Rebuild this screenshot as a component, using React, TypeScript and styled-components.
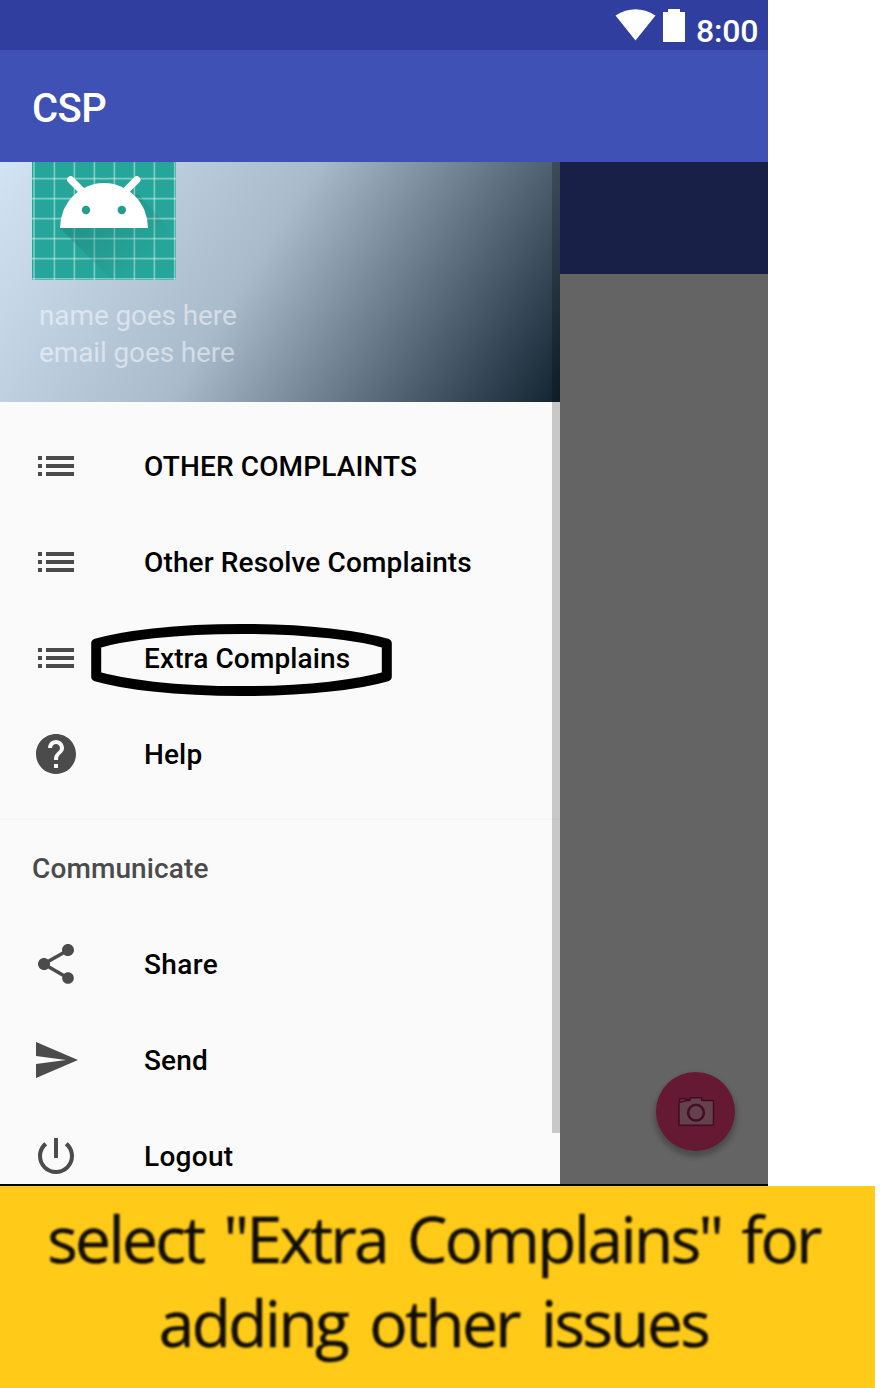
import React from "react";
import styled, { createGlobalStyle } from "styled-components";

const GlobalStyle = createGlobalStyle`
  body { margin: 0; background: #fff; font-family: Roboto, sans-serif; }
  * { box-sizing: border-box; }
`;

const Page = styled.div`
  width: 883px;
  height: 1388px;
  overflow: hidden;
`;

const Phone = styled.div`
  width: 768px;
  height: 1186px;
  display: flex;
  flex-direction: column;
  border-bottom: 2px solid #000;
`;

const StatusBar = styled.div`
  height: 50px;
  flex: none;
  background: #303f9f;
  color: #fff;
  display: flex;
  justify-content: flex-end;
  align-items: flex-start;
  padding: 9px 10px 0 0;
`;

const Clock = styled.span`
  font-size: 32px;
  line-height: 44px;
  font-weight: 500;
  letter-spacing: -0.2px;
  margin-left: 10px;
  width: 62px;
  white-space: nowrap;
`;

const AppBar = styled.div`
  height: 112px;
  flex: none;
  background: #3f51b5;
  color: #fff;
  display: flex;
  align-items: center;
  padding: 4px 0 0 32px;
  font-size: 40px;
  font-weight: 500;
  letter-spacing: -0.5px;
`;

const Body = styled.div`
  flex: 1;
  min-height: 0;
  display: flex;
`;

const Drawer = styled.div`
  position: relative;
  width: 560px;
  height: 100%;
  overflow: hidden;
  background: #fafafa;
`;

const ScrollBar = styled.div`
  position: absolute;
  right: 0;
  top: 0;
  width: 8px;
  height: 971px;
  background: rgba(0, 0, 0, 0.2);
`;

const Header = styled.div`
  height: 352px;
  margin-top: -112px;
  padding: 86px 32px 0;
  background: linear-gradient(122.15deg, #dbecfc 0%, #a9bacb 50%, #112231 100%);
`;

const Account = styled.div`
  padding: 17px 0 0 7px;
  font-size: 28px;
  line-height: 37px;
  letter-spacing: -0.12px;
  color: rgba(255, 255, 255, 0.5);
`;

const Menu = styled.div`
  padding-top: 16px;
`;

const Row = styled.div`
  position: relative;
  height: 96px;
  padding-left: 32px;
  display: flex;
  align-items: center;
  font-size: 28px;
  font-weight: 500;
  color: #000;
`;

const Label = styled.span<{ $spacing?: number }>`
  margin-left: 64px;
  padding-top: 1px;
  white-space: nowrap;
  letter-spacing: ${(p) => p.$spacing ?? 0.13}px;
`;

const Divider = styled.div`
  height: 2px;
  margin-top: 16px;
  background: #f6f6f6;
`;

const Section = styled.div`
  height: 96px;
  padding: 1px 0 0 32px;
  display: flex;
  align-items: center;
  font-size: 28px;
  font-weight: 500;
  letter-spacing: 0.12px;
  color: #4b4b4b;
`;

const Ring = styled.svg`
  position: absolute;
  left: 90px;
  top: 12px;
`;

const Content = styled.div`
  flex: 1;
  display: flex;
  flex-direction: column;
  background: #646464;
`;

const DimmedBar = styled.div`
  height: 112px;
  background: #192047;
`;

const FabArea = styled.div`
  flex: 1;
  display: flex;
  justify-content: flex-end;
  align-items: flex-end;
  padding: 0 33px 33px 0;
`;

const Fab = styled.div`
  width: 79px;
  height: 79px;
  border-radius: 50%;
  background: #661933;
  box-shadow: 0 4px 5px 2px rgba(0, 0, 0, 0.24);
  display: flex;
  align-items: center;
  justify-content: center;
`;

const Caption = styled.div`
  width: 875px;
  height: 202px;
  background: #ffca18;
  padding: 11px 8px 0 0;
  display: flex;
  flex-direction: column;
  align-items: center;
  font-family: "Open Sans", "Noto Sans", sans-serif;
  color: #100d02;
`;

const CaptionLine = styled.div<{ $gap: number }>`
  font-size: 64px;
  line-height: 83.5px;
  white-space: nowrap;
  letter-spacing: -2.6px;
  word-spacing: ${(p) => p.$gap}px;
  -webkit-text-stroke: 0.4px #100d02;
  filter: blur(0.8px);
`;

const paths = {
  list: "M3 13h2v-2H3v2zm0 4h2v-2H3v2zm0-8h2V7H3v2zm4 4h14v-2H7v2zm0 4h14v-2H7v2zM7 7v2h14V7H7z",
  help: "M12 2C6.48 2 2 6.48 2 12s4.48 10 10 10 10-4.48 10-10S17.52 2 12 2zm1 17h-2v-2h2v2zm2.07-7.75l-.9.92C13.45 12.9 13 13.5 13 15h-2v-.5c0-1.1.45-2.1 1.17-2.83l1.24-1.26c.37-.36.59-.86.59-1.41 0-1.1-.9-2-2-2s-2 .9-2 2H8c0-2.21 1.79-4 4-4s4 1.79 4 4c0 .88-.36 1.68-.93 2.25z",
  share:
    "M18 16.08c-.76 0-1.44.3-1.96.77L8.91 12.7c.05-.23.09-.46.09-.7s-.04-.47-.09-.7l7.05-4.11c.54.5 1.25.81 2.04.81 1.66 0 3-1.34 3-3s-1.34-3-3-3-3 1.34-3 3c0 .24.04.47.09.7L8.04 9.81C7.5 9.31 6.79 9 6 9c-1.66 0-3 1.34-3 3s1.34 3 3 3c.79 0 1.5-.31 2.04-.81l7.12 4.16c-.05.21-.08.43-.08.65 0 1.61 1.31 2.92 2.92 2.92s2.92-1.31 2.92-2.92-1.31-2.92-2.92-2.92z",
  send: "M2.01 21L23 12 2.01 3 2 10l15 2-15 2z",
  power:
    "M13 3h-2v10h2V3zm4.83 2.17l-1.42 1.42C17.99 7.86 19 9.81 19 12c0 3.87-3.13 7-7 7s-7-3.13-7-7c0-2.19 1.01-4.14 2.58-5.42L6.17 5.17C4.23 6.82 3 9.26 3 12c0 4.97 4.03 9 9 9s9-4.03 9-9c0-2.74-1.23-5.18-3.17-6.83z",
};

type IconName = keyof typeof paths;

const Icon = ({ name }: { name: IconName }) => (
  <svg width="48" height="48" viewBox="0 0 24 24" fill="#4b4b4b">
    <path d={paths[name]} />
  </svg>
);

const MenuItem = ({
  icon,
  text,
  spacing,
  circled,
}: {
  icon: IconName;
  text: string;
  spacing?: number;
  circled?: boolean;
}) => (
  <Row>
    <Icon name={icon} />
    <Label $spacing={spacing}>{text}</Label>
    {circled && (
      <Ring width="304" height="76" viewBox="90 622 304 76">
        <path
          d="M96.2 643.6A171 31 0 0 1 386.8 643.6V676.4A171 31 0 0 1 96.2 676.4Z"
          fill="none"
          stroke="#000"
          strokeWidth="10"
          strokeLinejoin="round"
        />
      </Ring>
    )}
  </Row>
);

const Avatar = () => (
  <svg width="144" height="144" viewBox="32 136 144 144" display="block">
    <defs>
      <linearGradient id="shade" gradientUnits="userSpaceOnUse" x1="85" y1="200" x2="145" y2="265">
        <stop offset="0" stopColor="#1c7c72" stopOpacity="0.5" />
        <stop offset="1" stopColor="#1c7c72" stopOpacity="0" />
      </linearGradient>
    </defs>
    <rect x="32" y="136" width="144" height="144" fill="#26a69a" />
    <g stroke="#fff" strokeOpacity="0.42" strokeWidth="1.6">
      {[34, 54.4, 74.4, 94.4, 114.4, 134.4, 154.4, 174.7].map((x) => (
        <path key={x} d={`M${x} 136V280`} />
      ))}
      {[158.6, 178.6, 198.6, 218.6, 238.6, 258.6, 278.7].map((y) => (
        <path key={y} d={`M32 ${y}H176`} />
      ))}
    </g>
    <path d="M60 228L112 280H176V236L138 194Z" fill="url(#shade)" />
    <path d="M60 228A44 45 0 0 1 148 228Z" fill="#fff" />
    <path d="M70.7 179.8L82 191M136.8 179.8L125.5 191" stroke="#fff" strokeWidth="7.2" strokeLinecap="round" />
    <circle cx="86" cy="210" r="4.2" fill="#249c90" />
    <circle cx="121.8" cy="210" r="4.2" fill="#249c90" />
  </svg>
);

const Camera = () => (
  <svg width="40" height="32" viewBox="676 1096 40 32" fill="#65414e" stroke="#420d20" strokeWidth="1.5">
    <path d="M679 1125.2V1102.3L680 1098.7H686.5V1100H690.3V1097.8H701.7V1100.6H713.5V1125.2Z" strokeLinejoin="round" />
    <path d="M679.6 1102.3L687 1100.6H690" fill="none" />
    <circle cx="696" cy="1112.7" r="7.9" strokeWidth="2.5" />
  </svg>
);

export default function App() {
  return (
    <Page>
      <GlobalStyle />
      <Phone>
        <StatusBar>
          <svg width="71" height="33" viewBox="615 9 71 33" fill="#fff">
            <path d="M615.5 15.5Q635.5 3 655.5 15.5L635.5 40.5Z" />
            <path d="M668 9H680V12H685V42H663V12H668Z" />
          </svg>
          <Clock>8:00</Clock>
        </StatusBar>
        <AppBar>CSP</AppBar>
        <Body>
          <Drawer>
            <Header>
              <Avatar />
              <Account>
                <div>name goes here</div>
                <div>email goes here</div>
              </Account>
            </Header>
            <Menu>
              <MenuItem icon="list" text="OTHER COMPLAINTS" />
              <MenuItem icon="list" text="Other Resolve Complaints" />
              <MenuItem icon="list" text="Extra Complains" circled />
              <MenuItem icon="help" text="Help" />
              <Divider />
              <Section>Communicate</Section>
              <MenuItem icon="share" text="Share" spacing={0.4} />
              <MenuItem icon="send" text="Send" />
              <MenuItem icon="power" text="Logout" spacing={0.3} />
            </Menu>
            <ScrollBar />
          </Drawer>
          <Content>
            <DimmedBar />
            <FabArea>
              <Fab>
                <Camera />
              </Fab>
            </FabArea>
          </Content>
        </Body>
      </Phone>
      <Caption>
        <CaptionLine $gap={6}>select "Extra Complains" for</CaptionLine>
        <CaptionLine $gap={8}>adding other issues</CaptionLine>
      </Caption>
    </Page>
  );
}
